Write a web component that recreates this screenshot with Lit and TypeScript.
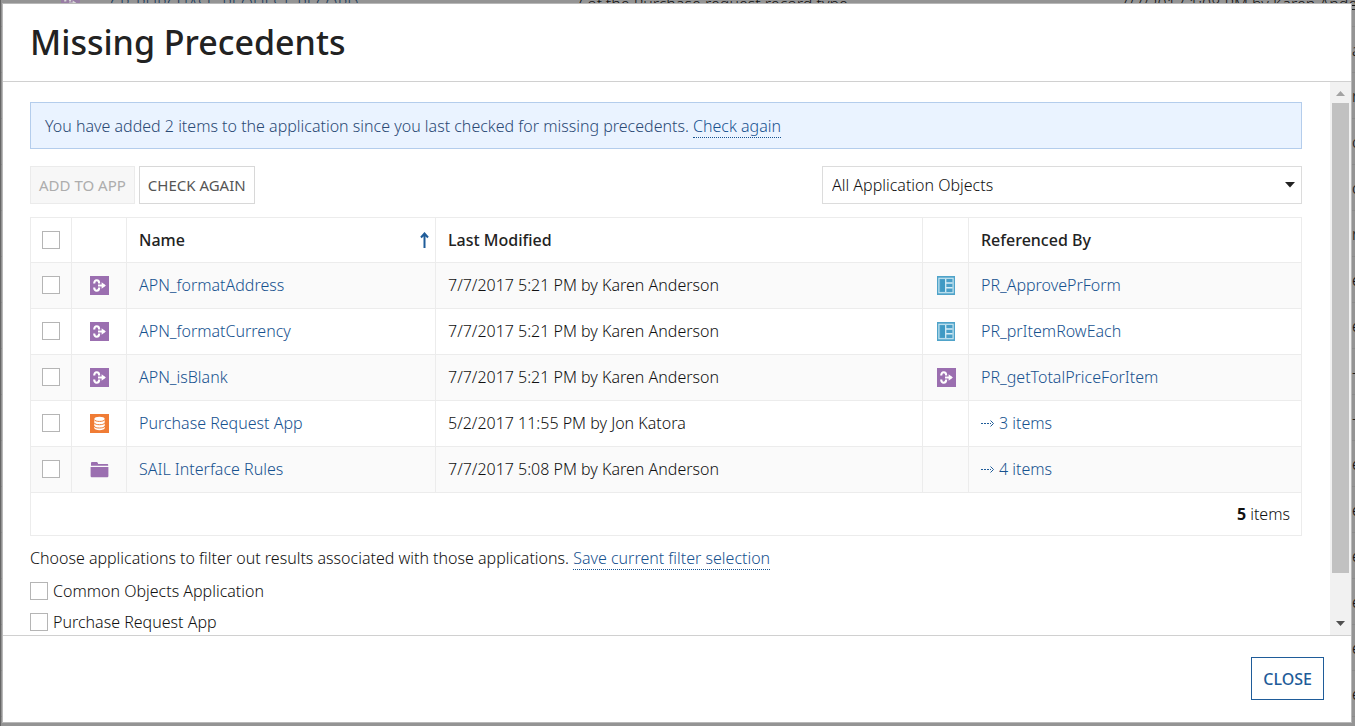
import { LitElement, html, css, svg, nothing, TemplateResult } from "lit";
import { customElement, property } from "lit/decorators.js";

type IconKind = "rule" | "interface" | "app" | "folder";

@customElement("object-icon")
class ObjectIcon extends LitElement {
  @property() kind: IconKind = "rule";

  static styles = css`
    :host { display: block; width: 19px; height: 19px; }
    svg { display: block; width: 19px; height: 19px; }
  `;

  private shape(): TemplateResult {
    switch (this.kind) {
      case "interface":
        return svg`
          <rect width="18" height="19" fill="#4fa3c9"/>
          <rect x="1.9" y="2.3" width="14.2" height="14.4" fill="#4a9fc8" stroke="#c5e4f0" stroke-width="1.2"/>
          <rect x="3.6" y="4" width="4.4" height="11" fill="#3f9ac4"/>
          <path d="M8.7 3v13" stroke="#d5edf6" stroke-width="1.3"/>
          <path d="M9 7.1h6.6M9 11.7h6.6" stroke="#d5edf6" stroke-width="1.5"/>`;
      case "app":
        return svg`
          <rect width="19" height="19" fill="#f07c35"/>
          <path d="M4.3 5c0-1.4 2.3-2.2 5.2-2.2s5.2.8 5.2 2.2v9c0 1.400-2.300 2.200-5.200 2.200S4.300 15.400 4.300 14z" fill="#fff"/>
          <path d="M4 5.500c1 1.500 3 1.900 5.500 1.900s4.500-.4 5.500-1.900M4 8.800c1 1.500 3 1.900 5.500 1.900s4.500-.4 5.500-1.900M4 12.100c1 1.500 3 1.900 5.500 1.900s4.500-.4 5.500-1.900" fill="none" stroke="#f07c35" stroke-width="1"/>`;
      case "folder":
        return svg`
          <path d="M1 5.800V3.200C1 2.300 1.500 2 2.200 2h4.200c.8 0 1.100.3 1.400 1l.4.900h9c.7 0 1 .4 1 1v.9z" fill="#9b6fb0"/>
          <path d="M.6 7h17.800v8.700c0 1-.6 1.600-1.500 1.600H2.100c-.9 0-1.500-.6-1.500-1.600z" fill="#9b6fb0"/>`;
      default:
        return svg`
          <rect width="19" height="19" fill="#9b6fb0"/>
          <path d="M4.200 7.600C4.200 5.300 5.200 4.200 6.700 4.200s2.500 1.200 2.500 3.200M4.200 11.400c0 2.300 1 3.400 2.500 3.400s2.500-1.200 2.500-3.200" fill="none" stroke="#fff" stroke-width="2.100"/>
          <path d="M8 9.500h6.500" stroke="#fff" stroke-width="2"/>
          <path d="M11.600 6.200 15.900 9.500l-4.300 3.300z" fill="#fff"/>`;
    }
  }

  render() {
    return html`<svg viewBox="0 0 19 19" aria-hidden="true">${this.shape()}</svg>`;
  }
}

interface Precedent {
  icon: IconKind;
  name: string;
  modified: string;
  refIcon?: IconKind;
  ref: string;
  group?: boolean;
}

const PRECEDENTS: Precedent[] = [
  { icon: "rule", name: "APN_formatAddress", modified: "7/7/2017 5:21 PM by Karen Anderson", refIcon: "interface", ref: "PR_ApprovePrForm" },
  { icon: "rule", name: "APN_formatCurrency", modified: "7/7/2017 5:21 PM by Karen Anderson", refIcon: "interface", ref: "PR_prItemRowEach" },
  { icon: "rule", name: "APN_isBlank", modified: "7/7/2017 5:21 PM by Karen Anderson", refIcon: "rule", ref: "PR_getTotalPriceForItem" },
  { icon: "app", name: "Purchase Request App", modified: "5/2/2017 11:55 PM by Jon Katora", ref: "3 items", group: true },
  { icon: "folder", name: "SAIL Interface Rules", modified: "7/7/2017 5:08 PM by Karen Anderson", ref: "4 items", group: true },
];

const PAGE_EDGE = ["a", "r", "c", "c", "r", "e", "e", "-", "-", "e", "e", "e", "e", "e", "e"];

@customElement("app-root")
class AppRoot extends LitElement {
  static styles = css`
    :host {
      display: block;
      position: relative;
      height: 100vh;
      overflow: hidden;
      background: #949494;
      color: #111;
      font: 350 16px/22px "Noto Sans", "Open Sans", sans-serif;
    }
    * { box-sizing: border-box; }

    /* dimmed page under the dialog */
    .page { position: absolute; inset: -19px 0 0 0; border-left: 1px solid #666; }
    .page-row {
      display: grid;
      grid-template-columns: 42px 55px 464px 545px 1fr;
      height: 46px;
      align-items: center;
      border-bottom: 1px solid #8a8a8a;
      color: #111;
      white-space: nowrap;
    }
    .page-row > * { padding-left: 12px; }
    .page-icon { padding-left: 18px; opacity: 0.6; }
    .page-link { color: #17395b; }
    .page-edge { grid-column: 5; padding-left: 245px; }

    .dialog {
      position: absolute;
      inset: 3px 3px 3px 2px;
      display: flex;
      flex-direction: column;
      background: #fff;
      border: 1px solid #b8b8b8;
    }
    .header { padding: 16px 27px 17px; border-bottom: 1px solid #d0d0d0; }
    h1 { margin: 0; font-size: 34px; line-height: 44px; font-weight: 500; color: #222; }
    .body { display: flex; flex: 1; min-height: 0; }
    .content { flex: 1; min-width: 0; overflow: hidden; padding: 20px 28px 0 27px; }

    a { color: #17528f; text-decoration: none; }
    .dotted { border-bottom: 1px dotted #17528f; }
    .notice {
      padding: 13px 14px 11px;
      border: 1px solid #b4cdec;
      background: #eaf3ff;
      color: #2b4a75;
      line-height: 21px;
      margin-bottom: 17px;
    }
    .toolbar { display: flex; align-items: stretch; gap: 4px; height: 38px; margin-bottom: 13px; }
    button {
      font: inherit;
      font-weight: 500;
      background: #fff;
      border: 1px solid #d8d8d8;
      color: #555;
      cursor: pointer;
    }
    .tool { font-size: 15px; font-weight: 400; padding: 0 8px 1px; }
    .tool:disabled { background: #f7f7f7; border-color: #ebebeb; color: #adadad; }
    .select { position: relative; width: 480px; margin-left: auto; }
    select {
      appearance: none;
      width: 100%;
      height: 100%;
      padding: 0 9px;
      font: inherit;
      color: #111;
      background: #fff;
      border: 1px solid #dcdcdc;
      border-radius: 0;
    }
    .caret { position: absolute; right: 7px; top: 16px; width: 10px; height: 6px; pointer-events: none; }

    table { width: 100%; border-collapse: collapse; table-layout: fixed; }
    th, td { border: 1px solid #ececec; height: 46px; padding: 0 12px 1px; text-align: left; }
    th { height: 45px; font-weight: 500; color: #222; }
    .c-check { width: 41px; }
    .c-icon { width: 55px; }
    .c-name { width: 309px; }
    .c-ref-icon { width: 46px; }
    .c-ref { width: 333px; }
    .check { padding: 0 11px 1px; }
    .icon { padding: 0 18px; }
    .ref-icon { padding: 0 14px; }
    tbody tr:nth-child(odd) { background: #fafafa; }
    .total { height: 43px; padding-right: 11px; text-align: right; }
    .total b { font-weight: 700; }
    .sorted { display: flex; align-items: center; justify-content: space-between; }
    .sort-arrow { width: 9px; height: 16px; margin-right: -6px; }
    .group { display: flex; align-items: center; gap: 4px; }
    .group svg { width: 14px; height: 8px; }

    input {
      appearance: none;
      display: block;
      flex: none;
      width: 18px;
      height: 18px;
      margin: 0;
      border: 1px solid #b5b5b5;
      background: #fff;
    }
    .filter-text { margin: 11px 0; }
    .option { display: flex; align-items: center; gap: 5px; margin-bottom: 9px; }

    .scrollbar {
      display: flex;
      flex-direction: column;
      align-items: center;
      width: 21px;
      padding: 0 2px;
      background: #f1f1f1;
    }
    .scrollbar svg { width: 9px; height: 21px; }
    .track { flex: 1; width: 100%; }
    .thumb { height: 92%; background: #c1c1c1; }

    .footer { display: flex; justify-content: flex-end; padding: 21px 27px 22px; border-top: 1px solid #d0d0d0; }
    .close { height: 43px; padding: 0 11px; border-color: #1f5c99; color: #1f5c99; }
  `;

  private row(p: Precedent) {
    return html`<tr>
      <td class="check"><input type="checkbox" aria-label=${p.name} /></td>
      <td class="icon"><object-icon kind=${p.icon}></object-icon></td>
      <td><a href="#">${p.name}</a></td>
      <td>${p.modified}</td>
      <td class="ref-icon">${p.refIcon ? html`<object-icon kind=${p.refIcon}></object-icon>` : nothing}</td>
      <td>
        ${p.group
          ? html`<a class="group" href="#"><svg viewBox="0 0 14 8" aria-hidden="true" fill="none" stroke="#1f5c99"><path d="M0 4.500h10" stroke-dasharray="2 1"/><path d="M9.500 1.500l3 3-3 3"/></svg>${p.ref}</a>`
          : html`<a href="#">${p.ref}</a>`}
      </td>
    </tr>`;
  }

  render() {
    return html`
      <div class="page" aria-hidden="true">
        <div class="page-row">
          <span></span>
          <span class="page-icon"><object-icon kind="rule"></object-icon></span>
          <span class="page-link">CP_PURCHASE_REQUEST_RECORD</span>
          <span>7 of the Purchase request record type</span>
          <span>7/7/2017 1:08 PM by Karen Anderson</span>
        </div>
        ${PAGE_EDGE.map((t) => html`<div class="page-row"><span class="page-edge">${t}</span></div>`)}
      </div>

      <section class="dialog" role="dialog" aria-labelledby="title">
        <header class="header"><h1 id="title">Missing Precedents</h1></header>
        <div class="body">
          <main class="content">
            <div class="notice">You have added 2 items to the application since you last checked for missing precedents. <a class="dotted" href="#">Check again</a></div>
            <div class="toolbar">
              <button class="tool" disabled>ADD TO APP</button>
              <button class="tool">CHECK AGAIN</button>
              <div class="select">
                <select aria-label="Object filter"><option>All Application Objects</option></select>
                <svg class="caret" viewBox="0 0 10 6" aria-hidden="true"><path d="M0 0h10L5 5.500z" fill="#222"/></svg>
              </div>
            </div>
            <table>
              <colgroup>
                <col class="c-check" /><col class="c-icon" /><col class="c-name" /><col /><col class="c-ref-icon" /><col class="c-ref" />
              </colgroup>
              <thead>
                <tr>
                  <th class="check"><input type="checkbox" aria-label="Select all" /></th>
                  <th></th>
                  <th>
                    <div class="sorted">Name
                      <svg class="sort-arrow" viewBox="0 0 9 16" aria-hidden="true" fill="none" stroke="#1f5c99" stroke-width="2"><path d="M4.500 16V2M1 5.500l3.500-4 3.500 4"/></svg>
                    </div>
                  </th>
                  <th>Last Modified</th>
                  <th></th>
                  <th>Referenced By</th>
                </tr>
              </thead>
              <tbody>${PRECEDENTS.map((p) => this.row(p))}</tbody>
              <tfoot><tr><td class="total" colspan="6"><b>5</b> items</td></tr></tfoot>
            </table>
            <p class="filter-text">Choose applications to filter out results associated with those applications. <a class="dotted" href="#">Save current filter selection</a></p>
            <label class="option"><input type="checkbox" />Common Objects Application</label>
            <label class="option"><input type="checkbox" />Purchase Request App</label>
          </main>
          <div class="scrollbar" aria-hidden="true">
            <svg viewBox="0 0 9 21"><path d="M0 14l4.500-5L9 14z" fill="#a3a3a3"/></svg>
            <div class="track"><div class="thumb"></div></div>
            <svg viewBox="0 0 9 21"><path d="M0 7h9l-4.500 5z" fill="#505050"/></svg>
          </div>
        </div>
        <footer class="footer"><button class="close">CLOSE</button></footer>
      </section>
    `;
  }
}
